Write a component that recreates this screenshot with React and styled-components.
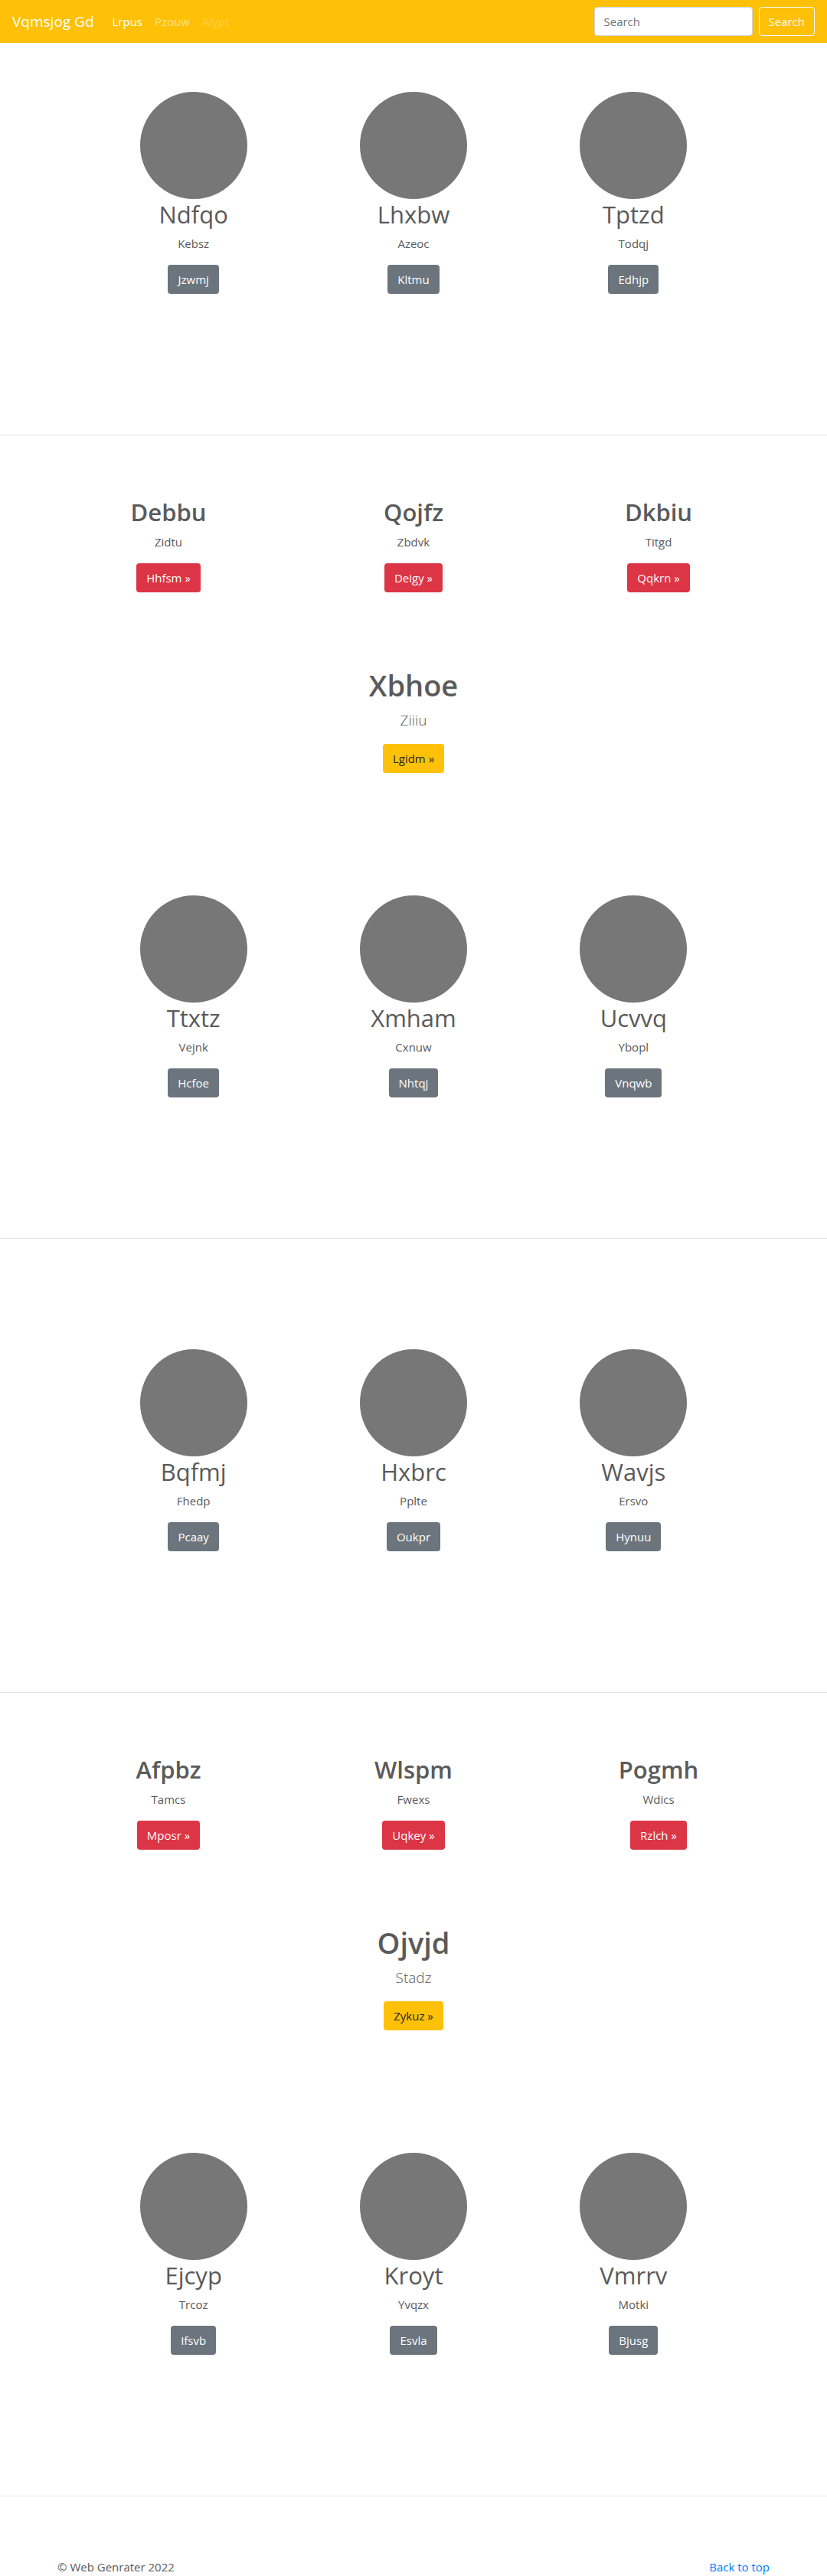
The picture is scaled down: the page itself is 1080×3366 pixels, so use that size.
import React from "react";
import styled, { createGlobalStyle, css } from "styled-components";

const GlobalStyle = createGlobalStyle`
  *, *::before, *::after { box-sizing: border-box; }
  body {
    margin: 0;
    background: #fff;
    color: #5a5a5a;
    font-family: "Segoe UI", "Open Sans", "Noto Sans", sans-serif;
    font-size: 15px;
    line-height: 24px;
  }
`;

const Navbar = styled.header`
  display: flex;
  align-items: center;
  justify-content: space-between;
  height: 56px;
  padding: 0 16px;
  background: #ffc107;
`;

const NavGroup = styled.nav`
  display: flex;
  align-items: center;
  gap: 16px;
`;

const Brand = styled.a`
  margin-right: 8px;
  color: #fff;
  font-size: 19px;
  line-height: 30px;
  text-decoration: none;
`;

const NavLink = styled.a`
  color: rgba(255, 255, 255, ${(p) => p.$alpha});
  text-decoration: none;
`;

const SearchForm = styled.form`
  display: flex;
  gap: 8px;
`;

const control = css`
  height: 38px;
  padding: 0 12px;
  border-radius: 4px;
  font: inherit;
`;

const SearchInput = styled.input`
  ${control}
  width: 207px;
  border: 1px solid #ced4da;
  background: #fff;
  color: #495057;
  &::placeholder { color: #6c757d; opacity: 1; }
`;

const SearchButton = styled.button`
  ${control}
  border: 1px solid #f8f9fa;
  background: transparent;
  color: #f8f9fa;
  cursor: pointer;
`;

const Container = styled.section`
  max-width: 960px;
  margin: 0 auto;
  text-align: center;
`;

const Profiles = styled(Container)`
  display: grid;
  grid-template-columns: repeat(3, 1fr);
  padding: ${(p) => p.$top}px 49px 184px;
`;

const Features = styled(Container)`
  display: grid;
  grid-template-columns: repeat(3, 1fr);
  padding-top: 80px;
`;

const Hero = styled(Container)`
  padding-top: 96px;
`;

const Card = styled.article`
  display: flex;
  flex-direction: column;
  align-items: center;
`;

const Avatar = styled.div`
  width: 140px;
  height: 140px;
  border-radius: 50%;
  background: #777;
`;

const Title = styled.h2`
  margin: 0 0 8px;
  padding-top: 2px;
  font-size: 31px;
  font-weight: 400;
  line-height: 36px;
`;

const FeatureTitle = styled(Title)`
  font-weight: 600;
  line-height: 37px;
`;

const HeroTitle = styled(Title)`
  font-size: 38px;
  font-weight: 600;
  line-height: 46px;
`;

const Text = styled.p`
  margin: 0 0 16px;
`;

const Lead = styled(Text)`
  font-size: 19px;
  font-weight: 300;
  line-height: 30px;
`;

const tones = {
  secondary: ["#6c757d", "#fff"],
  danger: ["#dc3545", "#fff"],
  warning: ["#ffc107", "#212529"],
};

const ButtonLink = styled.a`
  height: 38px;
  padding: 7px 13px;
  border-radius: 4px;
  background: ${(p) => tones[p.$tone][0]};
  color: ${(p) => tones[p.$tone][1]};
  text-decoration: none;
`;

const Divider = styled.hr`
  height: 1px;
  margin: 0;
  border: 0;
  background: rgba(0, 0, 0, 0.1);
`;

const Footer = styled.footer`
  display: flex;
  justify-content: space-between;
  max-width: 960px;
  margin: 0 auto;
  padding: 80px 15px 0;
`;

const FooterLink = styled.a`
  color: #007bff;
  text-decoration: none;
`;

function ProfileRow({ items, top }) {
  return (
    <Profiles $top={top}>
      {items.map(([name, text, action]) => (
        <Card key={name}>
          <Avatar />
          <Title>{name}</Title>
          <Text>{text}</Text>
          <ButtonLink href="#" $tone="secondary">{action}</ButtonLink>
        </Card>
      ))}
    </Profiles>
  );
}

function FeatureRow({ items }) {
  return (
    <Features>
      {items.map(([name, text, action]) => (
        <Card key={name}>
          <FeatureTitle>{name}</FeatureTitle>
          <Text>{text}</Text>
          <ButtonLink href="#" $tone="danger">{action} »</ButtonLink>
        </Card>
      ))}
    </Features>
  );
}

function HeroBlock({ title, lead, action }) {
  return (
    <Hero>
      <Card>
        <HeroTitle>{title}</HeroTitle>
        <Lead>{lead}</Lead>
        <ButtonLink href="#" $tone="warning">{action} »</ButtonLink>
      </Card>
    </Hero>
  );
}

const groups = [
  {
    top: 64,
    intro: [["Ndfqo", "Kebsz", "Jzwmj"], ["Lhxbw", "Azeoc", "Kltmu"], ["Tptzd", "Todqj", "Edhjp"]],
    features: [["Debbu", "Zidtu", "Hhfsm"], ["Qojfz", "Zbdvk", "Deigy"], ["Dkbiu", "Titgd", "Qqkrn"]],
    hero: { title: "Xbhoe", lead: "Ziiiu", action: "Lgidm" },
    outro: [["Ttxtz", "Vejnk", "Hcfoe"], ["Xmham", "Cxnuw", "Nhtqj"], ["Ucvvq", "Ybopl", "Vnqwb"]],
  },
  {
    top: 144,
    intro: [["Bqfmj", "Fhedp", "Pcaay"], ["Hxbrc", "Pplte", "Oukpr"], ["Wavjs", "Ersvo", "Hynuu"]],
    features: [["Afpbz", "Tamcs", "Mposr"], ["Wlspm", "Fwexs", "Uqkey"], ["Pogmh", "Wdics", "Rzlch"]],
    hero: { title: "Ojvjd", lead: "Stadz", action: "Zykuz" },
    outro: [["Ejcyp", "Trcoz", "Ifsvb"], ["Kroyt", "Yvqzx", "Esvla"], ["Vmrrv", "Motki", "Bjusg"]],
  },
];

export default function App() {
  return (
    <>
      <GlobalStyle />
      <Navbar id="top">
        <NavGroup>
          <Brand href="#">Vqmsjog Gd</Brand>
          <NavLink href="#" $alpha={1}>Lrpus</NavLink>
          <NavLink href="#" $alpha={0.5}>Pzouw</NavLink>
          <NavLink href="#" $alpha={0.25}>Alypt</NavLink>
        </NavGroup>
        <SearchForm onSubmit={(e) => e.preventDefault()}>
          <SearchInput type="text" placeholder="Search" aria-label="Search" />
          <SearchButton type="submit">Search</SearchButton>
        </SearchForm>
      </Navbar>
      <main>
        {groups.map((g) => (
          <React.Fragment key={g.top}>
            <ProfileRow items={g.intro} top={g.top} />
            <Divider />
            <FeatureRow items={g.features} />
            <HeroBlock {...g.hero} />
            <ProfileRow items={g.outro} top={160} />
            <Divider />
          </React.Fragment>
        ))}
      </main>
      <Footer>
        <span>© Web Genrater 2022</span>
        <FooterLink href="#top">Back to top</FooterLink>
      </Footer>
    </>
  );
}
